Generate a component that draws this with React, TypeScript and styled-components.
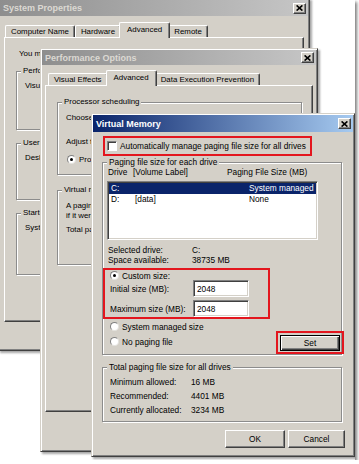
import React from "react";
import styled, { createGlobalStyle, css } from "styled-components";

const FACE = "#d4d0c8";
const SHADE = "#808080";
const DARK = "#404040";
const MARK = "#e3161e";

const GlobalStyle = createGlobalStyle`
  html, body {
    margin: 0;
    padding: 0;
    background: #fff;
  }
  body {
    font-family: "Liberation Sans", Arial, sans-serif;
  }
`;

const Desktop = styled.div`
  position: relative;
  width: 355px;
  height: 460px;
  overflow: hidden;
  background: #fff;
  box-shadow: 2px 2px 3px rgba(0, 0, 0, 0.5);
`;

// windows sit on a free canvas, so their place is given by props
const Window = styled.div<{ $x: number; $y: number; $w: number; $h: number; $font?: number }>`
  position: absolute;
  left: ${p => p.$x}px;
  top: ${p => p.$y}px;
  width: ${p => p.$w}px;
  height: ${p => p.$h}px;
  box-sizing: border-box;
  display: flex;
  flex-direction: column;
  padding: 1px;
  background: ${FACE};
  border: 1px solid;
  border-color: ${FACE} ${DARK} ${DARK} ${FACE};
  box-shadow: inset 1px 1px #fff, inset -1px -1px ${SHADE},
    2px 2px 2px rgba(0, 0, 0, 0.35);
  font-size: ${p => p.$font ?? 7.9}px;
  line-height: 10px;
  color: #000;
  white-space: nowrap;
`;

const TitleBar = styled.div<{ $active?: boolean; $h: number }>`
  flex: none;
  height: ${p => p.$h}px;
  display: flex;
  align-items: center;
  justify-content: space-between;
  padding: 0 2px 0 3px;
  background: ${p =>
    p.$active
      ? "linear-gradient(90deg, #0a246a, #a6caf0)"
      : "linear-gradient(90deg, #8e8e8e, #c6c6c6)"};
  color: ${p => (p.$active ? "#fff" : "#dcd9d3")};
  font-size: 9px;
  font-weight: bold;
`;

const CloseBox = styled.div`
  width: 13px;
  height: 11px;
  box-sizing: border-box;
  display: flex;
  align-items: center;
  justify-content: center;
  background: ${FACE};
  border: 1px solid;
  border-color: #fff ${DARK} ${DARK} #fff;
  box-shadow: inset -1px -1px ${SHADE};
`;

const CloseGlyph = () => (
  <svg width="7" height="6" viewBox="0 0 7 6">
    <path d="M0.6 0.4 L6.4 5.6 M6.4 0.4 L0.6 5.6" stroke="#000" strokeWidth="1.6" />
  </svg>
);

const TabStrip = styled.div<{ $top: number; $side: number; $lead: number }>`
  position: relative;
  z-index: 1;
  display: flex;
  align-items: flex-end;
  height: 15px;
  margin: ${p => p.$top}px ${p => p.$side}px 0;
  padding-left: ${p => p.$lead}px;
`;

const Tab = styled.div<{ $selected?: boolean }>`
  box-sizing: border-box;
  height: 12px;
  padding: 0 5px;
  display: flex;
  align-items: center;
  background: ${FACE};
  border-top: 1px solid #fff;
  border-left: 1px solid #fff;
  border-right: 1px solid ${DARK};
  border-radius: 2px 2px 0 0;
  box-shadow: inset -1px 0 ${SHADE};
  ${p =>
    p.$selected &&
    css`
      height: 16px;
      margin: 0 -2px -1px;
      padding: 0 7px 2px;
      position: relative;
      z-index: 2;
    `}
`;

const TabPanel = styled.div<{ $h: number; $side: number }>`
  flex: none;
  box-sizing: border-box;
  height: ${p => p.$h}px;
  margin: 0 ${p => p.$side}px;
  border: 1px solid;
  border-color: #fff ${DARK} ${DARK} #fff;
  box-shadow: inset -1px -1px ${SHADE};
`;

const Group = styled.div<{ $h: number }>`
  position: relative;
  flex: none;
  box-sizing: border-box;
  height: ${p => p.$h}px;
  border: 1px solid #8c8c8c;
  box-shadow: inset 1px 1px #fff, 1px 1px #fff;
  display: flex;
  flex-direction: column;
`;

const Legend = styled.span`
  position: absolute;
  top: -6px;
  left: 4px;
  padding: 0 2px;
  background: ${FACE};
`;

const Line = styled.div<{ $gap?: number }>`
  margin-top: ${p => p.$gap ?? 0}px;
`;

const Radio = styled.span<{ $on?: boolean }>`
  position: relative;
  flex: none;
  width: 9px;
  height: 9px;
  box-sizing: border-box;
  border-radius: 50%;
  background: #fff;
  border: 1px solid;
  border-color: ${SHADE} #e4e2de #e4e2de ${SHADE};
  ${p =>
    p.$on &&
    css`
      &::after {
        content: "";
        position: absolute;
        left: 2px;
        top: 2px;
        width: 3px;
        height: 3px;
        border-radius: 50%;
        background: #000;
      }
    `}
`;

const CheckBox = styled.span`
  flex: none;
  width: 10px;
  height: 10px;
  box-sizing: border-box;
  background: #fff;
  border: 1px solid;
  border-color: ${SHADE} #fff #fff ${SHADE};
  box-shadow: inset 1px 1px ${DARK};
`;

const Option = styled.div`
  display: flex;
  align-items: center;
  gap: 3px;
  height: 9px;
`;

const Button = styled.button<{ $w: number; $h: number; $default?: boolean }>`
  box-sizing: border-box;
  width: ${p => p.$w}px;
  height: ${p => p.$h}px;
  margin: 0;
  padding: 0;
  font: inherit;
  color: #000;
  background: ${FACE};
  border: 1px solid;
  border-color: #fff ${DARK} ${DARK} #fff;
  box-shadow: inset -1px -1px ${SHADE};
  ${p =>
    p.$default &&
    css`
      border-color: #000;
      box-shadow: inset 1px 1px #fff, inset -1px -1px ${DARK}, inset -2px -2px ${SHADE};
    `}
`;

/* ---------- System Properties ---------- */

const SysPage = styled.div`
  display: flex;
  flex-direction: column;
  padding: 11px 11px 0;
`;

const SysNote = styled.div`
  padding-left: 3px;
  margin-bottom: 12px;
`;

const SysGroupText = styled.div`
  padding: 9px 8px 0;
`;

const SysGap = styled.div`
  height: 13px;
  flex: none;
`;

function SystemProperties() {
  return (
    <Window $x={-2} $y={-2} $w={312} $h={353}>
      <TitleBar $h={16}>
        <span>System Properties</span>
        <CloseBox>
          <CloseGlyph />
        </CloseBox>
      </TitleBar>
      <TabStrip $top={6} $side={4} $lead={1}>
        <Tab>Computer Name</Tab>
        <Tab>Hardware</Tab>
        <Tab $selected>Advanced</Tab>
        <Tab>Remote</Tab>
      </TabStrip>
      <TabPanel $h={285} $side={4}>
        <SysPage>
          <SysNote>You must be logged on as an Administrator to make most of these changes.</SysNote>
          <Group $h={59}>
            <Legend>Performance</Legend>
            <SysGroupText>Visual effects, processor scheduling, memory usage, and virtual memory</SysGroupText>
          </Group>
          <SysGap />
          <Group $h={57}>
            <Legend>User Profiles</Legend>
            <SysGroupText>Desktop settings related to your logon</SysGroupText>
          </Group>
          <SysGap />
          <Group $h={62}>
            <Legend>Startup and Recovery</Legend>
            <SysGroupText>System startup, system failure, and debugging information</SysGroupText>
          </Group>
        </SysPage>
      </TabPanel>
    </Window>
  );
}

/* ---------- Performance Options ---------- */

const PerfPage = styled.div`
  display: flex;
  flex-direction: column;
  gap: 15px;
  padding: 16px 10px 0 11px;
`;

const PerfGroupBody = styled.div`
  padding: 10px 8px 0;
`;

const ChoiceRow = styled.div`
  display: flex;
  align-items: center;
  gap: 50px;
  margin-top: 8px;
  padding-left: 1px;
`;

function PerformanceOptions() {
  return (
    <Window $x={40} $y={48} $w={278} $h={404}>
      <TitleBar $h={15}>
        <span>Performance Options</span>
        <CloseBox>
          <CloseGlyph />
        </CloseBox>
      </TitleBar>
      <TabStrip $top={5} $side={3} $lead={3}>
        <Tab>Visual Effects</Tab>
        <Tab $selected>Advanced</Tab>
        <Tab>Data Execution Prevention</Tab>
      </TabStrip>
      <TabPanel $h={327} $side={3}>
        <PerfPage>
          <Group $h={73}>
            <Legend>Processor scheduling</Legend>
            <PerfGroupBody>
              <Line>Choose how to allocate processor resources.</Line>
              <Line $gap={14}>Adjust for best performance of:</Line>
              <ChoiceRow>
                <Option>
                  <Radio $on />
                  <span>Programs</span>
                </Option>
                <Option>
                  <Radio />
                  <span>Background services</span>
                </Option>
              </ChoiceRow>
            </PerfGroupBody>
          </Group>
          <Group $h={75}>
            <Legend>Virtual memory</Legend>
            <PerfGroupBody>
              <Line>A paging file is an area on the hard disk that Windows uses as</Line>
              <Line>if it were RAM.</Line>
              <Line $gap={4}>Total paging file size for all drives:&nbsp;&nbsp;&nbsp;3234 MB</Line>
            </PerfGroupBody>
          </Group>
        </PerfPage>
      </TabPanel>
    </Window>
  );
}

/* ---------- Virtual Memory ---------- */

const VmBody = styled.div`
  display: flex;
  flex-direction: column;
  padding: 4px 11px 0 9px;
`;

const AutoRow = styled.div`
  display: flex;
  align-items: center;
  gap: 3px;
  box-sizing: border-box;
  width: 209px;
  height: 20px;
  margin-left: 1px;
  padding-left: 2px;
  border: 2px solid ${MARK};
`;

const DriveGroup = styled(Group)`
  margin-top: 6px;
  padding: 4px 4px 0;
`;

const ColumnHead = styled.div`
  display: grid;
  grid-template-columns: 25px 94px auto;
  padding-left: 1px;
`;

const DriveList = styled.div`
  box-sizing: border-box;
  width: 211px;
  height: 61px;
  margin-top: 4px;
  padding: 1px;
  background: #fff;
  border: 1px solid;
  border-color: ${SHADE} #fff #fff ${SHADE};
  box-shadow: inset 1px 1px ${DARK}, inset -1px -1px ${FACE};
`;

const DriveRow = styled.div<{ $selected?: boolean }>`
  display: grid;
  grid-template-columns: 24px 114px auto;
  height: 11px;
  line-height: 11px;
  padding-left: 2px;
  ${p =>
    p.$selected &&
    css`
      background: #0a246a;
      color: #fff;
    `}
`;

const InfoGrid = styled.div<{ $label: number; $gap: number }>`
  display: grid;
  grid-template-columns: ${p => p.$label}px auto;
  row-gap: ${p => p.$gap}px;
`;

const DriveInfo = styled(InfoGrid)`
  margin-top: 5px;
  padding-left: 1px;
`;

const CustomBox = styled.div`
  box-sizing: border-box;
  width: 167px;
  height: 52px;
  margin: 3px 0 0 -4px;
  padding: 1px 0 0 5px;
  border: 2px solid ${MARK};
`;

const SizeGrid = styled.div`
  display: grid;
  grid-template-columns: 83px 56px;
  grid-auto-rows: 17px;
  row-gap: 3px;
  align-items: center;
`;

const SizeField = styled.input`
  box-sizing: border-box;
  width: 56px;
  height: 17px;
  margin: 0;
  padding: 0 0 0 3px;
  font: inherit;
  color: #000;
  background: #fff;
  border: 1px solid;
  border-color: ${SHADE} #fff #fff ${SHADE};
  box-shadow: inset 1px 1px ${DARK}, inset -1px -1px ${FACE};
  outline: none;
`;

const ModeRow = styled.div`
  display: flex;
  justify-content: space-between;
  align-items: flex-start;
  margin-top: 3px;
  padding-left: 3px;
`;

const ModeStack = styled.div`
  display: flex;
  flex-direction: column;
  gap: 6px;
`;

const SetBox = styled.div`
  box-sizing: border-box;
  display: flex;
  align-items: center;
  justify-content: center;
  width: 68px;
  height: 23px;
  margin: 9px -7px 0 0;
  border: 2px solid ${MARK};
`;

const TotalGroup = styled(Group)`
  margin-top: 12px;
  padding: 9px 0 0 7px;
`;

const DialogButtons = styled.div`
  display: flex;
  justify-content: flex-end;
  gap: 3px;
  margin: 8px -3px 0 0;
`;

function VirtualMemory() {
  return (
    <Window $x={91} $y={113} $w={264} $h={344} $font={8.3}>
      <TitleBar $active $h={17}>
        <span>Virtual Memory</span>
        <CloseBox>
          <CloseGlyph />
        </CloseBox>
      </TitleBar>
      <VmBody>
        <AutoRow>
          <CheckBox />
          <span>Automatically manage paging file size for all drives</span>
        </AutoRow>

        <DriveGroup $h={193}>
          <Legend>Paging file size for each drive</Legend>
          <ColumnHead>
            <span>Drive</span>
            <span>[Volume Label]</span>
            <span>Paging File Size (MB)</span>
          </ColumnHead>
          <DriveList>
            <DriveRow $selected>
              <span>C:</span>
              <span />
              <span>System managed</span>
            </DriveRow>
            <DriveRow>
              <span>D:</span>
              <span>[data]</span>
              <span>None</span>
            </DriveRow>
          </DriveList>
          <DriveInfo $label={84} $gap={0}>
            <span>Selected drive:</span>
            <span>C:</span>
            <span>Space available:</span>
            <span>38735 MB</span>
          </DriveInfo>
          <CustomBox>
            <Option>
              <Radio $on />
              <span>Custom size:</span>
            </Option>
            <SizeGrid>
              <span>Initial size (MB):</span>
              <SizeField readOnly value="2048" />
              <span>Maximum size (MB):</span>
              <SizeField readOnly value="2048" />
            </SizeGrid>
          </CustomBox>
          <ModeRow>
            <ModeStack>
              <Option>
                <Radio />
                <span>System managed size</span>
              </Option>
              <Option>
                <Radio />
                <span>No paging file</span>
              </Option>
            </ModeStack>
            <SetBox>
              <Button $w={60} $h={16} $default>
                Set
              </Button>
            </SetBox>
          </ModeRow>
        </DriveGroup>

        <TotalGroup $h={55}>
          <Legend>Total paging file size for all drives</Legend>
          <InfoGrid $label={81} $gap={4}>
            <span>Minimum allowed:</span>
            <span>16 MB</span>
            <span>Recommended:</span>
            <span>4401 MB</span>
            <span>Currently allocated:</span>
            <span>3234 MB</span>
          </InfoGrid>
        </TotalGroup>

        <DialogButtons>
          <Button $w={60} $h={18}>
            OK
          </Button>
          <Button $w={57} $h={18}>
            Cancel
          </Button>
        </DialogButtons>
      </VmBody>
    </Window>
  );
}

export default function App() {
  return (
    <>
      <GlobalStyle />
      <Desktop>
        <SystemProperties />
        <PerformanceOptions />
        <VirtualMemory />
      </Desktop>
    </>
  );
}
